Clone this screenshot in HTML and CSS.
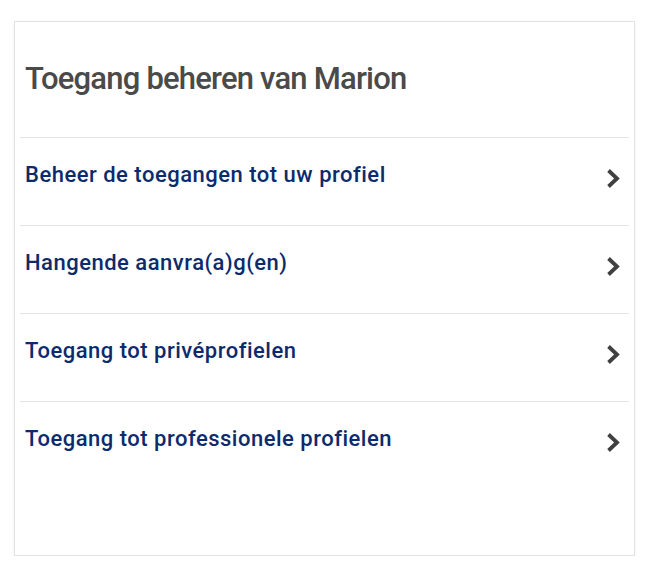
FILE: index.html
```html
<!DOCTYPE html>
<html lang="nl">
<head>
    <meta charset="UTF-8">
    <meta name="viewport" content="width=device-width, initial-scale=1.0">
    <title>Toegang beheren</title>
    <link rel="stylesheet" href="styles.css">
</head>
<body>
    <div class="card">
        <h2 class="card-title">Toegang beheren van Marion</h2>

        <!-- Menu -->
        <ul class="menu">
            <li>
                <a class="menu-item" href="#">
                    <span>Beheer de toegangen tot uw profiel</span>
                    <svg class="chevron" viewBox="0 0 14 21"><path d="M2.5 2.5 L11 10.5 L2.5 18.5"/></svg>
                </a>
            </li>
            <li>
                <a class="menu-item" href="#">
                    <span>Hangende aanvra(a)g(en)</span>
                    <svg class="chevron" viewBox="0 0 14 21"><path d="M2.5 2.5 L11 10.5 L2.5 18.5"/></svg>
                </a>
            </li>
            <li>
                <a class="menu-item" href="#">
                    <span>Toegang tot privéprofielen</span>
                    <svg class="chevron" viewBox="0 0 14 21"><path d="M2.5 2.5 L11 10.5 L2.5 18.5"/></svg>
                </a>
            </li>
            <li>
                <a class="menu-item" href="#">
                    <span>Toegang tot professionele profielen</span>
                    <svg class="chevron" viewBox="0 0 14 21"><path d="M2.5 2.5 L11 10.5 L2.5 18.5"/></svg>
                </a>
            </li>
        </ul>
    </div>
</body>
</html>
```

FILE: styles.css
```css
body {
    font-family: Roboto, "Liberation Sans", sans-serif;
    margin: 0;
    background-color: white;
}

/* Card */
.card {
    box-sizing: border-box;
    margin: 21px 0 0 14px;
    width: 621px;
    height: 535px;
    border: 1px solid #e2e2e2;
    box-shadow: 0 1px 3px rgba(0, 0, 0, 0.06);
}

.card-title {
    margin: 0;
    padding: 39px 10px 40px;
    font-size: 31px;
    line-height: 36px;
    font-weight: 500;
    letter-spacing: -0.8px;
    color: #4a4a4a;
}

/* Menu */
.menu {
    list-style: none;
    margin: 0;
    padding: 0;
}

.menu li {
    margin: 0 5px;
    border-top: 1px solid #e4e4e4;
}

.menu-item {
    display: flex;
    justify-content: space-between;
    align-items: flex-start;
    height: 87px;
    box-sizing: border-box;
    padding: 24px 9px 0 5px;
    font-size: 22px;
    line-height: 26px;
    font-weight: 500;
    letter-spacing: 0.5px;
    color: #0c2b6d;
    text-decoration: none;
}

.chevron {
    width: 14px;
    height: 21px;
    margin-top: 6px;
    fill: none;
    stroke: #404040;
    stroke-width: 3.8;
}
```
